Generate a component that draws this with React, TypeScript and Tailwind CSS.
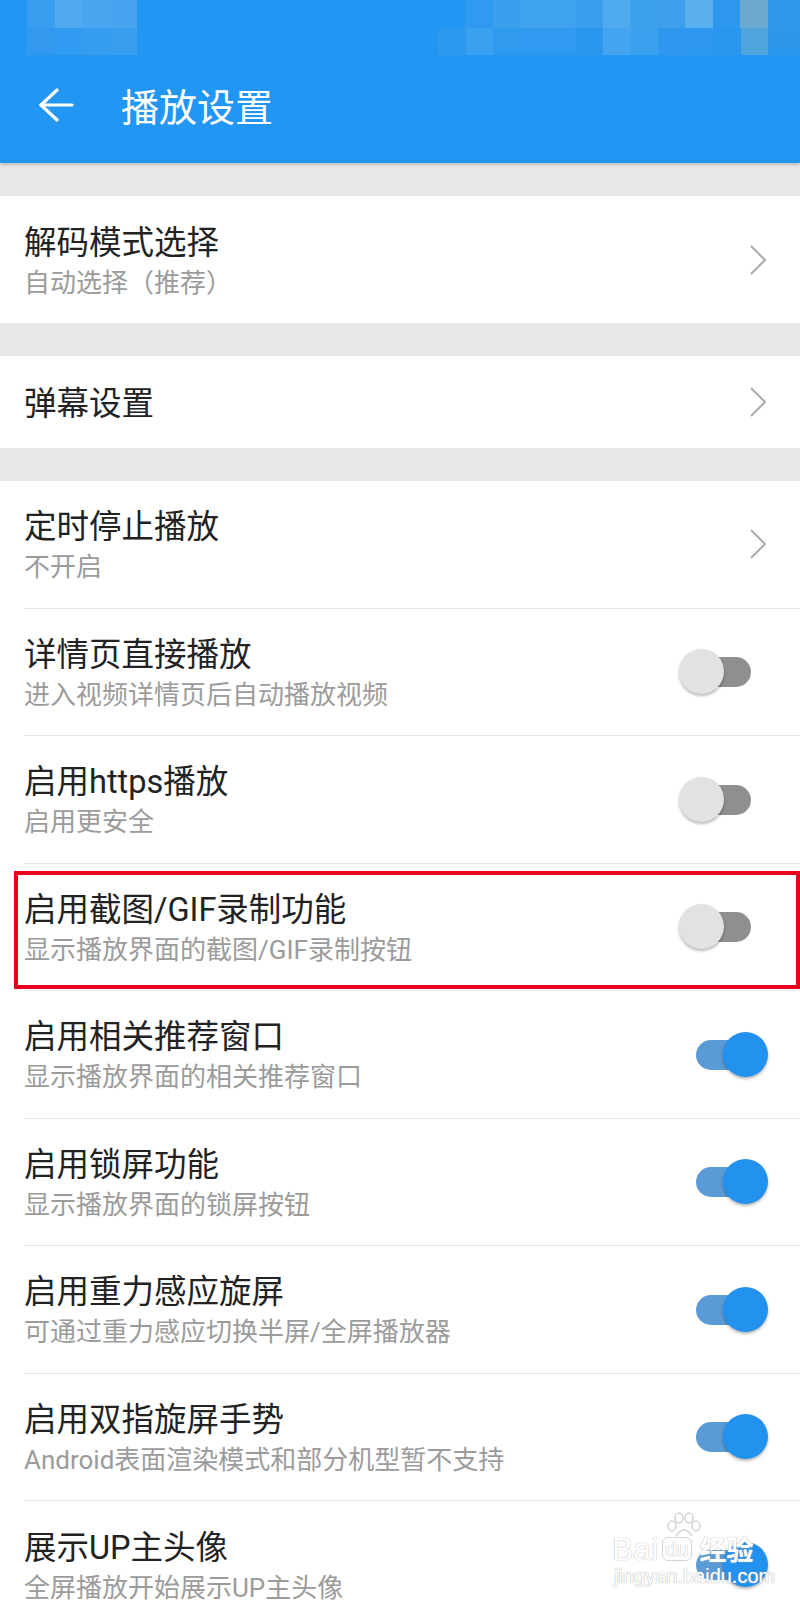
import React from "react";

const topBlocks = {
  leftTop: ["#3a9ef0", "#52a9f0", "#4aa5f0", "#47a2ef"],
  leftBottom: ["#3399ee", "#319bf1", "#349df0", "#3a9eef"],
  rightTop: ["#2f9af0", "#3aa0ee", "#3fa3ef", "#3ea2ee", "#3a9fee", "#50aaee", "#3ea1ec", "#3ea0ec", "#5aafef", "#2e98ef", "#6ba9cf", "#3098ea"],
  rightBottom: ["#2c98ee", "#3aa0f0", "#309bee", "#2f9aef", "#2f9aef", "#2b97ef", "#45a4ef", "#3ba0ee", "#2f98ee", "#2d98ed", "#2a96ee", "#4fa4dc", "#2d97ec"],
};

const rows = [
  { title: "定时停止播放", sub: "不开启", kind: "link" },
  { title: "详情页直接播放", sub: "进入视频详情页后自动播放视频", kind: "off" },
  { title: "启用https播放", sub: "启用更安全", kind: "off" },
  { title: "启用截图/GIF录制功能", sub: "显示播放界面的截图/GIF录制按钮", kind: "off", marked: true },
  { title: "启用相关推荐窗口", sub: "显示播放界面的相关推荐窗口", kind: "on" },
  { title: "启用锁屏功能", sub: "显示播放界面的锁屏按钮", kind: "on" },
  { title: "启用重力感应旋屏", sub: "可通过重力感应切换半屏/全屏播放器", kind: "on" },
  { title: "启用双指旋屏手势", sub: "Android表面渲染模式和部分机型暂不支持", kind: "on" },
  { title: "展示UP主头像", sub: "全屏播放开始展示UP主头像", kind: "on" },
];

const Chevron = () => (
  <svg width="16" height="30" viewBox="0 0 16 30" className="mr-[1px]">
    <polyline points="1,1 15,15 1,29" fill="none" stroke="#ababab" strokeWidth="2" />
  </svg>
);

const Toggle = ({ on }: { on: boolean }) => (
  <div className="relative w-[89px] h-[45px]">
    <div
      className={
        on
          ? "absolute left-[17px] right-[17px] top-[8px] h-[30px] rounded-full bg-[#5b9bd5]"
          : "absolute left-[17px] right-[17px] top-[8px] h-[30px] rounded-full bg-[#8f8f8f]"
      }
    />
    <div
      className={
        on
          ? "absolute right-0 top-0 w-[45px] h-[45px] rounded-full bg-[#2391ee] shadow-[0_2px_3px_rgba(0,0,0,0.28)]"
          : "absolute left-0 top-0 w-[45px] h-[45px] rounded-full bg-[#e2e2e2] shadow-[0_2px_3px_rgba(0,0,0,0.28)]"
      }
    />
  </div>
);

const TextBlock = ({ title, sub }: { title: string; sub?: string }) => (
  <div className="flex flex-col pt-[4px]">
    <span className="text-[32.5px] leading-[42px] text-[#222222]">{title}</span>
    {sub && <span className="text-[26px] leading-[38px] text-[#9b9b9b]">{sub}</span>}
  </div>
);

const Watermark = () => (
  <div className="absolute left-[612px] top-[1510px] w-[170px] h-[80px] pointer-events-none">
    <svg width="40" height="26" viewBox="0 0 40 26" className="absolute left-[52px] top-[2px]">
      <g fill="none" stroke="#d4d4d4" strokeWidth="1.5">
        <ellipse cx="8" cy="14" rx="4" ry="5" />
        <ellipse cx="15" cy="6" rx="4" ry="5" />
        <ellipse cx="25" cy="6" rx="4" ry="5" />
        <ellipse cx="32" cy="14" rx="4" ry="5" />
        <path d="M12 24 Q20 12 28 24" />
      </g>
    </svg>
    <div className="absolute left-0 top-[24px] flex items-center gap-[4px] font-['Liberation_Sans',sans-serif] text-[32px] leading-[30px] text-white [text-shadow:0_0_1px_#b8b8b8,0_0_1px_#b8b8b8]">
      <span>Bai</span>
      <span className="text-[21px] leading-[22px] px-[2px] rounded-[6px] border border-[#d4d4d4]">du</span>
      <span className="font-['Noto_Sans_CJK_SC',sans-serif] text-[27px] font-bold ml-[4px]">经验</span>
    </div>
    <div className="absolute left-[2px] top-[55px] font-['Liberation_Sans',sans-serif] text-[20px] leading-[22px] text-white [text-shadow:0_0_1px_#b0b0b0,0_0_1px_#b0b0b0]">
      jingyan.baidu.com
    </div>
  </div>
);

const App = () => {
  return (
    <div className="relative w-[800px] h-[1600px] overflow-hidden bg-[#e8e8e8] font-['Roboto','Noto_Sans_CJK_SC',sans-serif]">
      <header className="relative z-10 h-[163px] bg-[#2196f3] shadow-[0_2px_3px_rgba(0,0,0,0.18)]">
        <div className="h-[55px] overflow-hidden">
          <div className="flex h-[27.5px]">
            <div className="w-[27px] shrink-0" />
            {topBlocks.leftTop.map((c, i) => (
              <div key={i} className="w-[27.5px] shrink-0" style={{ backgroundColor: c }} />
            ))}
            <div className="w-[328px] shrink-0" />
            {topBlocks.rightTop.map((c, i) => (
              <div key={i} className="w-[27.5px] shrink-0" style={{ backgroundColor: c }} />
            ))}
            <div className="flex-1 bg-[#3098ea]" />
          </div>
          <div className="flex h-[27.5px]">
            <div className="w-[27px] shrink-0" />
            {topBlocks.leftBottom.map((c, i) => (
              <div key={i} className="w-[27.5px] shrink-0" style={{ backgroundColor: c }} />
            ))}
            <div className="w-[301px] shrink-0" />
            {topBlocks.rightBottom.map((c, i) => (
              <div key={i} className="w-[27.5px] shrink-0" style={{ backgroundColor: c }} />
            ))}
            <div className="flex-1 bg-[#2d97ec]" />
          </div>
        </div>
        <div className="flex items-center h-[100px]">
          <svg width="36" height="34" viewBox="0 0 36 34" className="ml-[38px]">
            <g fill="none" stroke="#ffffff" strokeWidth="3.2" strokeLinecap="round" strokeLinejoin="round">
              <path d="M3 17 H34" />
              <path d="M19 2 L3 17 L19 32" />
            </g>
          </svg>
          <h1 className="ml-[47px] text-[38px] leading-[44px] text-white font-['Noto_Sans_CJK_SC',sans-serif]">播放设置</h1>
        </div>
      </header>

      <div className="h-[33px]" />

      <div className="flex items-center justify-between h-[127px] bg-white pl-6 pr-[33px]">
        <TextBlock title="解码模式选择" sub="自动选择（推荐）" />
        <Chevron />
      </div>

      <div className="h-[33px]" />

      <div className="flex items-center justify-between h-[92px] bg-white pl-6 pr-[33px]">
        <TextBlock title="弹幕设置" />
        <Chevron />
      </div>

      <div className="h-[33px]" />

      <div className="bg-white">
        {rows.map((row, i) => (
          <div key={i} className="relative h-[127.5px] pl-6">
            <div
              className={
                i < rows.length - 1
                  ? "flex items-center justify-between h-full border-b border-[#e6e6e6]"
                  : "flex items-center justify-between h-full"
              }
            >
              <TextBlock title={row.title} sub={row.sub} />
              {row.kind === "link" ? (
                <div className="pr-[33px]">
                  <Chevron />
                </div>
              ) : (
                <div className="pr-[32px]">
                  <Toggle on={row.kind === "on"} />
                </div>
              )}
            </div>
            {row.marked && (
              <div className="absolute left-[14px] right-0 top-[7px] h-[118px] border-[4px] border-[#e8001c]" />
            )}
          </div>
        ))}
      </div>

      <Watermark />
    </div>
  );
};

export default App;
